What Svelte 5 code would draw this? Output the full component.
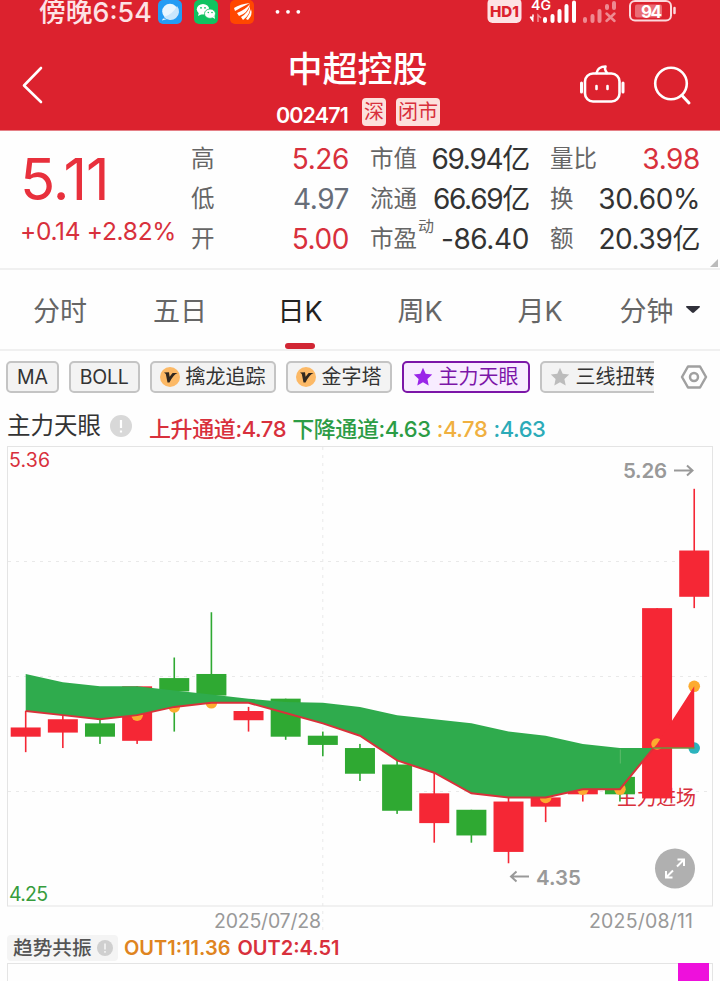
<script>
  const quotes = [
    [
      { label: "高", value: "5.26", tone: "up" },
      { label: "低", value: "4.97", tone: "flat" },
      { label: "开", value: "5.00", tone: "up" }
    ],
    [
      { label: "市值", value: "69.94亿", tone: "tight" },
      { label: "流通", value: "66.69亿", tone: "tight" },
      { label: "市盈", sup: "动", value: "-86.40" }
    ],
    [
      { label: "量比", value: "3.98", tone: "up" },
      { label: "换", value: "30.60%" },
      { label: "额", value: "20.39亿" }
    ]
  ];

  const tabs = ["分时", "五日", "日K", "周K", "月K", "分钟"];
  let activeTab = "日K";

  const chips = [
    { name: "MA" },
    { name: "BOLL" },
    { name: "擒龙追踪", icon: "v" },
    { name: "金字塔", icon: "v" },
    { name: "主力天眼", icon: "star" },
    { name: "三线扭转", icon: "star" }
  ];
  let activeChip = "主力天眼";

  // open, close, high, low
  const candles = [
    [4.66, 4.68, 4.72, 4.62],
    [4.67, 4.7, 4.72, 4.63],
    [4.69, 4.66, 4.7, 4.64],
    [4.65, 4.78, 4.78, 4.64],
    [4.8, 4.77, 4.85, 4.67],
    [4.81, 4.76, 4.96, 4.75],
    [4.7, 4.72, 4.73, 4.67],
    [4.75, 4.66, 4.75, 4.65],
    [4.66, 4.64, 4.67, 4.61],
    [4.63, 4.57, 4.64, 4.55],
    [4.59, 4.48, 4.6, 4.47],
    [4.45, 4.52, 4.57, 4.4],
    [4.48, 4.42, 4.48, 4.4],
    [4.38, 4.5, 4.51, 4.35],
    [4.49, 4.51, 4.51, 4.45],
    [4.52, 4.53, 4.53, 4.5],
    [4.56, 4.52, 4.56, 4.5],
    [4.51, 4.97, 4.97, 4.51],
    [5.0, 5.11, 5.26, 4.97]
  ];
  const rising = [4.72, 4.71, 4.7, 4.71, 4.73, 4.74, 4.74, 4.715, 4.69, 4.66, 4.6, 4.57, 4.52, 4.51, 4.51, 4.53, 4.53, 4.64, 4.78];
  const falling = [4.81, 4.79, 4.78, 4.78, 4.77, 4.76, 4.75, 4.742, 4.74, 4.73, 4.71, 4.7, 4.69, 4.67, 4.66, 4.64, 4.63, 4.63, 4.63];
  const dots = [3, 4, 5, 14, 15, 16, 17, 18];

  const x = (i) => 25.7 + i * 37.14;
  const y = (p) => 488.8 + (5.26 - p) * 411.5;
  const point = (p, i) => `${x(i)},${y(p)}`;

  // the two channels cross shortly before the 18th bar
  const cross = `653.5,${y(4.63)}`;
  const redLine = [...rising.slice(0, 17).map(point), cross].join(" ");
  const greenArea = [...falling.slice(0, 17).map(point), cross, ...rising.slice(0, 17).map(point).reverse()].join(" ");
  const redArea = [cross, point(4.64, 17), point(4.78, 18), point(4.63, 18)].join(" ");
</script>

<div class="app">
  <header>
    <div class="status">
      <span class="clock">傍晚6:54</span>
      <svg class="apps" width="150" height="24" viewBox="0 0 150 24">
        <rect width="24" height="24" rx="5" fill="#249cf4" />
        <path d="M5 18.5l-1 2 5-1.5z" fill="#e9f6ff" />
        <circle cx="12" cy="11.5" r="7.8" fill="#e9f6ff" />
        <path d="M6 17Q15 14 19 6A7.8 7.8 0 0 1 6 17z" fill="#c9e6fc" />
        <rect x="36" width="24" height="24" rx="5" fill="#10c260" />
        <ellipse cx="45" cy="9.3" rx="6.2" ry="5.2" fill="#fff" />
        <path d="M41 12l-1 4 4-2z" fill="#fff" />
        <ellipse cx="52" cy="13.7" rx="5.5" ry="4.7" fill="#fff" stroke="#10c260" stroke-width=".8" />
        <path d="M54 17l3 2-.5-3z" fill="#fff" />
        <g fill="#10c260"><circle cx="43" cy="7.8" r=".9" /><circle cx="47" cy="7.8" r=".9" /><circle cx="50.3" cy="12.5" r=".8" /><circle cx="54" cy="12.5" r=".8" /></g>
        <rect x="72" width="24" height="24" rx="5" fill="#ff4700" />
        <path d="M76 8Q82 4 92 3Q82 8 77 11zM79 13Q87 10 92 4Q90 13 81 16zM83 17Q90 13 92 6Q93 14 85 20zM88 19Q92 14 93 9Q95 15 90 20z" fill="#fff" />
        <g fill="#fff"><circle cx="119.5" cy="11.8" r="1.9" /><circle cx="130" cy="11.8" r="1.9" /><circle cx="140.3" cy="11.8" r="1.9" /></g>
      </svg>
      <svg class="signals" width="192" height="24" viewBox="486 0 192 24">
        <rect x="487.5" y="-2" width="34" height="25" rx="5" fill="#fde3e5" />
        <text x="490" y="17" font-size="15" font-weight="800" fill="#dc222e" textLength="29" lengthAdjust="spacingAndGlyphs">HD1</text>
        <text x="531" y="9.500" font-size="13" font-weight="600" fill="#fff" textLength="20" lengthAdjust="spacingAndGlyphs">4G</text>
        <path d="M530 17h3v-2.500v7z" fill="#fff" stroke="#fff" />
        <path d="M538 22v-7l3 3" fill="none" stroke="#f18d94" stroke-width="1.500" />
        <g stroke="#fff" stroke-width="4" stroke-linecap="round">
          <path d="M545 19v2M552.500 16v5M559.500 11v10M566.500 6v15M574 2.500v18.500" />
        </g>
        <g stroke="#ee8a91" stroke-width="4" stroke-linecap="round">
          <path d="M585 19v2M592.500 16v5M599.500 11v10M607 6v2M614 3v5" />
          <path d="M606.500 13.500l8 7.500M614.500 13.500l-8 7.500" stroke-width="2.500" />
        </g>
        <rect x="630" y="1" width="41" height="19.500" rx="5" fill="none" stroke="#fbd9dc" stroke-width="2" />
        <rect x="635" y="4.500" width="27" height="13" rx="2" fill="#ea6d76" />
        <path d="M674.500 8v5" stroke="#fbd9dc" stroke-width="2.500" stroke-linecap="round" />
        <text x="641" y="17.500" font-size="17" font-weight="700" fill="#fff" textLength="21">94</text>
      </svg>
    </div>
    <div class="titlebar">
      <svg class="back" width="24" height="40" viewBox="0 0 24 40">
        <path d="M20 4L3 21.500 20 38" fill="none" stroke="#fff" stroke-width="2.600" stroke-linecap="round" stroke-linejoin="round" />
      </svg>
      <div class="name">
        <h1>中超控股</h1>
        <p><span class="code">002471</span><i>深</i><i>闭市</i></p>
      </div>
      <svg class="tools" width="114" height="44" viewBox="578 62 114 44" fill="none" stroke="#fff" stroke-width="2.600" stroke-linecap="round" stroke-linejoin="round">
        <rect x="585" y="73.500" width="34.500" height="28" rx="8" />
        <path d="M596.500 73Q598 66.500 605.500 66.500Q604 69 607 73" />
        <path d="M581.500 83v9M623 83v9" stroke-width="3" />
        <path d="M596.500 86v3M607.500 86v3" />
        <circle cx="671" cy="83.500" r="15.800" />
        <path d="M682 95.500l7 7.500" stroke-width="3" />
      </svg>
    </div>
  </header>

  <section class="quote">
    <div class="price">
      <strong>5.11</strong>
      <span>+0.14 +2.82%</span>
    </div>
    {#each quotes as column}
      <dl>
        {#each column as q}
          <div>
            <dt>{q.label}{#if q.sup}<sup>{q.sup}</sup>{/if}</dt>
            <dd class={q.tone}>{q.value}</dd>
          </div>
        {/each}
      </dl>
    {/each}
    <span class="corner"></span>
  </section>

  <nav>
    {#each tabs as tab}
      <button class:active={tab === activeTab} on:click={() => (activeTab = tab)}>
        {tab}
        {#if tab === "分钟"}
          <svg width="16" height="9" viewBox="0 0 16 9"><path d="M1.500 1h13q1 .5 0 1.500L9 7.600q-1 .8-2 0L1.500 2.500q-1-1 0-1.500z" fill="#30303a" /></svg>
        {/if}
      </button>
    {/each}
  </nav>

  <div class="indicators">
    <div class="chips">
      {#each chips as chip}
        <button class="chip" class:selected={chip.name === activeChip} class:plain={!chip.icon} on:click={() => (activeChip = chip.name)}>
          {#if chip.icon === "v"}
            <svg width="20" height="20" viewBox="0 0 20 20">
              <circle cx="10" cy="10" r="10" fill="#fcb966" />
              <path d="M4 5.500l5-.3.6 4.600L12.600 6h5Q13 8 9.500 15.500H7.500L5.800 7z" fill="#31281f" />
            </svg>
          {:else if chip.icon === "star"}
            <svg width="20" height="20" viewBox="0 0 20 20">
              <path d="M10 .8l2.700 6 6.500.7-4.800 4.400 1.300 6.500L10 15.200l-5.700 3.200 1.300-6.500L.8 7.500l6.500-.7z" fill={chip.name === activeChip ? "#9a25e8" : "#bcbcbc"} />
            </svg>
          {/if}
          <span>{chip.name}</span>
        </button>
      {/each}
    </div>
    <svg class="gear" width="28" height="26" viewBox="0 0 28 26" fill="none" stroke="#a0a0a0" stroke-width="2.500" stroke-linejoin="round">
      <path d="M8 2.500h12L26 13l-6 10.500H8L2 13z" />
      <circle cx="14" cy="13" r="4" />
    </svg>
  </div>

  <div class="legend">
    <span class="title">主力天眼</span>
    <svg width="22" height="22" viewBox="0 0 22 22"><circle cx="11" cy="11" r="11" fill="#d8d8d8" /><path d="M11 5v8M11 15.500v2" stroke="#fff" stroke-width="2.200" /></svg>
    <span class="values">
      <b class="red">上升通道:4.78</b>
      <b class="green">下降通道:4.63</b>
      <b class="orange">:4.78</b>
      <b class="teal">:4.63</b>
    </span>
  </div>

  <svg class="chart" width="720" height="488" viewBox="0 445 720 488">
    <g fill="none" stroke="#e9e9e9">
      <path d="M8 561.500H712M8 676.500H712M8 791.500H712M322.800 447V930" stroke-dasharray="3 5" />
      <rect x="7.500" y="446.500" width="705" height="459.500" stroke="#e4e4e4" />
    </g>
    <text x="617" y="805" font-size="20" fill="#d8303c" textLength="79">主力进场</text>
    {#each candles as [open, close, high, low], i}
      <g fill={close >= open ? "#f52735" : "#2fa932"}>
        <rect x={x(i) - 0.8} y={y(high)} width="1.600" height={y(low) - y(high)} />
        <rect x={x(i) - 15} y={y(Math.max(open, close))} width="30" height={Math.abs(y(open) - y(close)) + 1} />
      </g>
    {/each}
    {#each dots as i}
      <circle cx={x(i)} cy={y(rising[i])} r="5.800" fill="#fdab2f" />
    {/each}
    <circle cx={x(18)} cy={y(4.63)} r="5.800" fill="#2cb3bd" />
    <polygon points={greenArea} fill="#2fab4d" />
    <polygon points={redArea} fill="#f52735" />
    <polyline points={redLine} fill="none" stroke="#d8323a" stroke-width="2" />
    <path d="M620.300 749.500v14" stroke="#5fbb6c" />
    <path d={`M653 ${y(4.63)}H694.500`} stroke="#6b9440" stroke-width="1.500" />

    <text x="9" y="467" font-size="19.500" fill="#d8303c" textLength="41">5.36</text>
    <text x="9" y="901" font-size="19.500" fill="#369c3c" textLength="39">4.25</text>
    <g fill="#999" font-size="20.500" font-weight="600">
      <text x="623" y="478" textLength="44">5.26</text>
      <text x="536" y="884.500" textLength="45">4.35</text>
    </g>
    <path d="M674 470.500h18M687 465.500l5.500 5-5.500 5M529 876.500h-18M516.500 871.500l-5.500 5 5.500 5" fill="none" stroke="#999" stroke-width="2" />
    <g fill="#999" font-size="19.500">
      <text x="214" y="927.500" textLength="107">2025/07/28</text>
      <text x="589" y="927.500" textLength="104">2025/08/11</text>
    </g>
    <circle cx="675" cy="868.500" r="20" fill="#b0b0b0" />
    <path d="M677 866.500l7-7M677.500 859.500h6.500v6.500M673 870.500l-7 7M666 871v6.500h6.500" fill="none" stroke="#fff" stroke-width="2" />
  </svg>

  <div class="sub">
    <span class="pill">
      趋势共振
      <svg width="16" height="16" viewBox="0 0 16 16"><circle cx="8" cy="8" r="8" fill="#cfcfcf" /><path d="M8 3.500v6M8 11v1.800" stroke="#f4f4f4" stroke-width="1.600" /></svg>
    </span>
    <b class="out1">OUT1:11.36</b>
    <b class="out2">OUT2:4.51</b>
  </div>
  <div class="subchart"><span></span></div>
</div>

<style>
  :global(body) {
    background: #fefefe;
  }

  .app {
    width: 720px;
    height: 981px;
    overflow: hidden;
    display: flex;
    flex-direction: column;
    background: #fefefe;
    color: #333;
    font-family: Inter, "Noto Sans CJK SC", sans-serif;
  }
  .app > * {
    flex: none;
  }

  svg {
    display: block;
    flex: none;
  }

  button {
    font: inherit;
    background: none;
    border: none;
    padding: 0;
  }

  header {
    height: 130px;
    background: #dc222e;
    color: #fff;
    border-bottom: 1px solid #e58087;
  }
  .status {
    display: flex;
    height: 24px;
    padding-left: 39px;
  }
  .clock {
    width: 119px;
    font-size: 26.8px;
    line-height: 24px;
    font-weight: 500;
    color: #fde3e5;
    white-space: nowrap;
  }
  .signals {
    margin-left: 178px;
  }
  .titlebar {
    display: grid;
    grid-template-columns: 200px 1fr 200px;
    height: 106px;
  }
  .back {
    margin: 40px 0 0 21px;
  }
  .tools {
    margin: 38px 0 0 58px;
  }
  .name {
    text-align: center;
  }
  h1 {
    margin: 21px 0 0 -5px;
    font-size: 35px;
    line-height: 48px;
    font-weight: 500;
  }
  .name p {
    display: flex;
    justify-content: center;
    align-items: flex-start;
    margin: 5px 0 0 -4px;
    line-height: 28px;
  }
  .code {
    width: 73px;
    font-size: 21.5px;
    font-weight: 600;
    letter-spacing: -0.9px;
    line-height: 34px;
    margin-right: 3px;
    text-align: left;
  }
  .name i {
    margin-left: 10px;
    padding: 0 2px;
    border-radius: 4px;
    background: #fde0dc;
    color: #d8303c;
    font-style: normal;
    font-size: 20px;
  }

  .quote {
    position: relative;
    display: grid;
    grid-template-columns: 169px 158px 159px 150px;
    column-gap: 21px;
    height: 137px;
    border-bottom: 2px solid #f0f0f0;
    padding-left: 1px;
  }
  .price {
    padding-left: 19px;
    color: #e8303c;
    white-space: nowrap;
  }
  .price strong {
    display: block;
    margin-top: 16px;
    font-size: 58px;
    line-height: 64px;
    font-weight: 400;
    letter-spacing: -1px;
  }
  .price span {
    display: block;
    margin-top: 6px;
    font-size: 24.5px;
    line-height: 28px;
    letter-spacing: -0.3px;
    color: #d8303c;
  }
  dl {
    margin: 8px 0 0;
  }
  dl div {
    display: flex;
    justify-content: space-between;
    height: 40px;
    line-height: 40px;
    white-space: nowrap;
  }
  dt {
    position: relative;
    font-size: 23.5px;
    color: #666;
  }
  dd {
    margin: 0;
    font-size: 28px;
    letter-spacing: -0.4px;
    color: #333;
  }
  .tight {
    letter-spacing: -1.3px;
  }
  .up {
    color: #d8303c;
  }
  .flat {
    color: #666d78;
  }
  sup {
    position: absolute;
    left: 48px;
    top: -13px;
    font-size: 16px;
    line-height: 40px;
  }
  .corner {
    position: absolute;
    right: 2px;
    bottom: 1px;
    border-left: 8px solid transparent;
    border-bottom: 8px solid #bbb;
  }

  nav {
    display: grid;
    grid-template-columns: repeat(6, 1fr);
    height: 79px;
    border-bottom: 2px solid #f0f0f0;
  }
  nav button {
    position: relative;
    display: flex;
    justify-content: center;
    align-items: center;
    gap: 11px;
    font-size: 27px;
    color: #666;
  }
  nav button.active {
    color: #222;
  }
  nav button.active::after {
    content: "";
    position: absolute;
    bottom: 0;
    width: 30px;
    height: 6px;
    border-radius: 3px;
    background: #d12634;
  }

  .indicators {
    display: flex;
    align-items: center;
    height: 51px;
    padding-left: 6px;
  }
  .chips {
    display: flex;
    gap: 10px;
    width: 648px;
    overflow: hidden;
  }
  .chip {
    display: flex;
    flex: none;
    align-items: center;
    gap: 6px;
    box-sizing: border-box;
    height: 32px;
    padding: 0 8px;
    border: 2px solid #c4c4c4;
    border-radius: 5px;
    background: #f3f3f3;
    color: #333;
    font-size: 20px;
    line-height: 28px;
  }
  .chip.plain {
    padding: 0 9px;
    font-size: 19.5px;
    letter-spacing: -0.2px;
  }
  .chip.selected {
    padding: 0 9px;
    border-color: #7c16a8;
    background: #f8ecff;
    color: #7c16a8;
  }
  .gear {
    margin-left: 26px;
  }

  .legend {
    display: flex;
    height: 43px;
    padding-left: 7px;
    line-height: 47px;
    white-space: nowrap;
  }
  .legend .title {
    font-size: 23.5px;
    width: 103px;
  }
  .legend svg {
    margin-top: 13px;
  }
  .values {
    display: flex;
    gap: 6px;
    margin: 4px 0 0 17px;
    font-size: 22px;
    letter-spacing: -0.4px;
  }
  .values b {
    font-weight: 500;
  }
  .red {
    color: #d8303c;
  }
  .green {
    color: #2c9c45;
  }
  .orange {
    color: #f0b040;
  }
  .teal {
    color: #2cabb8;
  }

  .sub {
    display: flex;
    align-items: center;
    height: 30px;
    padding-left: 7px;
    line-height: 26px;
    font-size: 20px;
  }
  .sub b {
    font-weight: 600;
  }
  .pill {
    display: flex;
    align-items: center;
    gap: 5px;
    box-sizing: border-box;
    width: 111px;
    height: 26px;
    padding-left: 6px;
    margin-right: 6px;
    border-radius: 4px;
    background: #f4f4f4;
    color: #555;
    font-size: 19.7px;
    font-weight: 500;
    white-space: nowrap;
  }
  .out1 {
    color: #df8420;
    margin-right: 7px;
  }
  .out2 {
    color: #d8303c;
  }
  .subchart {
    box-sizing: border-box;
    width: 706px;
    height: 40px;
    margin-left: 7px;
    border: 1px solid #e4e4e4;
  }
  .subchart span {
    display: block;
    width: 31px;
    height: 40px;
    margin: -1px 0 0 670px;
    background: #ee10dc;
  }
</style>
